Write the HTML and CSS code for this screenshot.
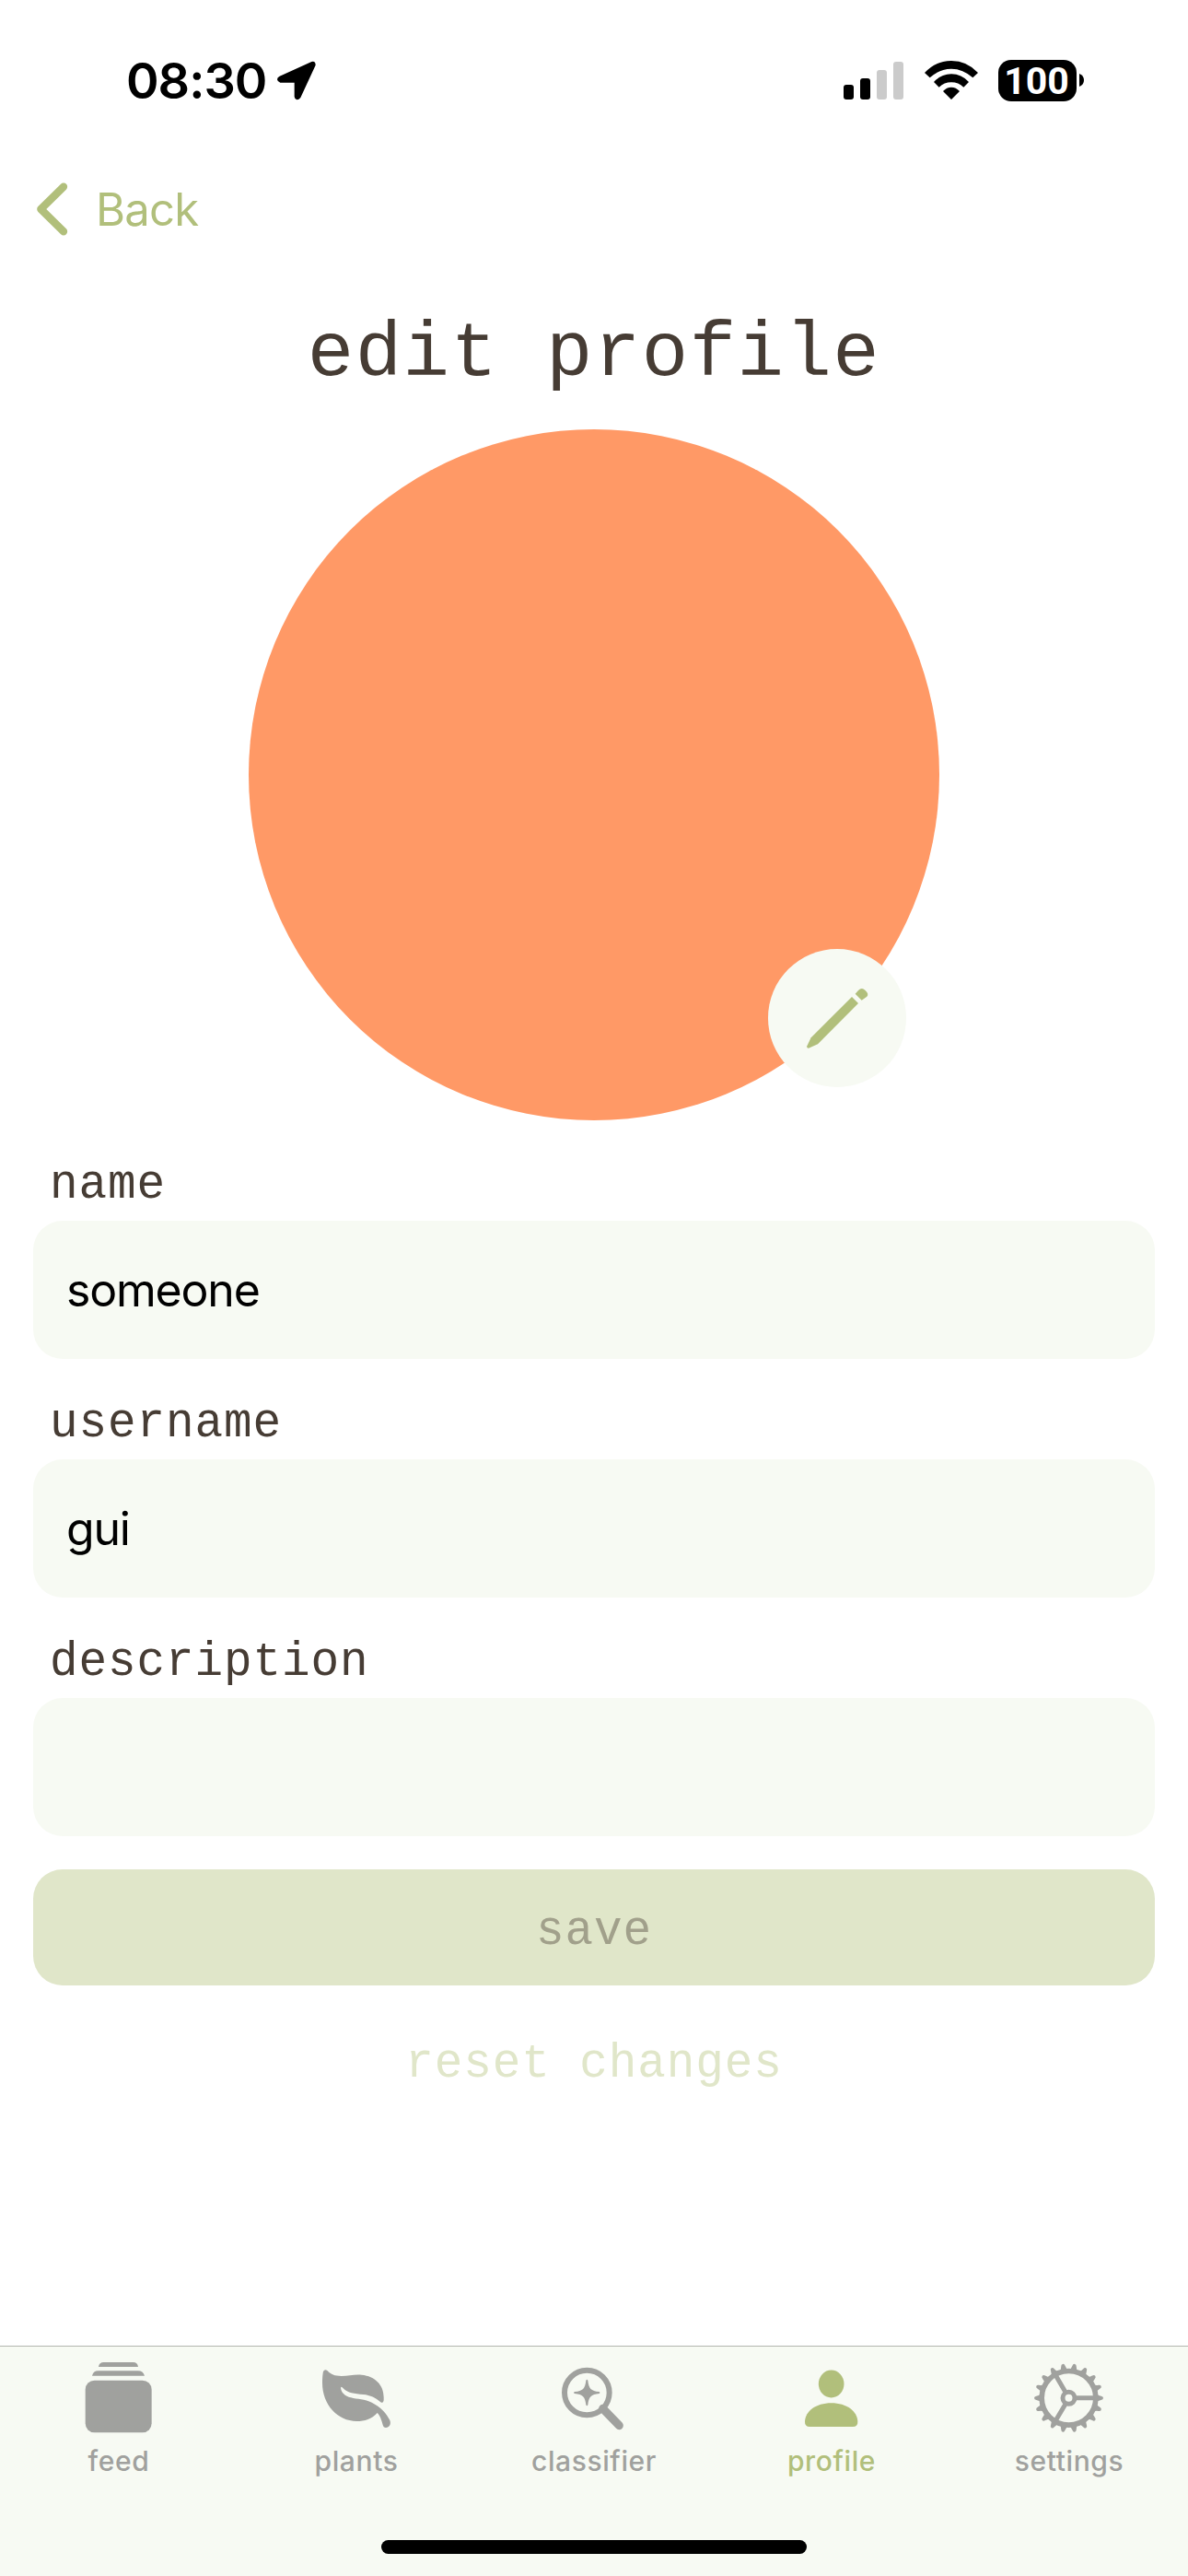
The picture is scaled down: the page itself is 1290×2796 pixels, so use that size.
FILE: index.html
```html
<!DOCTYPE html>
<html lang="en">
<head>
<meta charset="utf-8">
<title>edit profile</title>
<link rel="stylesheet" href="styles.css">
</head>
<body>
<div class="screen">
  <header class="status">
    <div class="status-left">
      <span class="time">08:30</span>
      <svg class="location" viewBox="900 80 132 129"><path d="M1015 83Q1028 80 1028 94L979 200Q974 207 967 207Q960 205 959 197V151H913Q904 149 903 141Q903 134 911 130Z"/></svg>
    </div>
    <div class="status-right">
      <svg class="signal" viewBox="108 78 195 123"><rect x="108" y="153" width="33" height="48" rx="9"/><rect x="162" y="132" width="33" height="69" rx="9"/><g fill="#cbcbcb"><rect x="216" y="105" width="33" height="96" rx="9"/><rect x="270" y="78" width="33" height="123" rx="9"/></g></svg>
      <svg class="wifi" viewBox="371 75 174 126"><path d="M371 114Q407 75 458 75T545 114L528 130Q496 101 458 101T388 130ZM401 144Q425 118 458 118T515 144L498 161Q481 145 458 145T418 161ZM431 174Q443 161 458 161T485 174L458 201Z"/></svg>
      <div class="battery"><span class="battery-body">100</span><svg class="battery-tip" viewBox="0 0 5 14"><path d="M0 0Q5 2 5 7T0 14Z"/></svg></div>
    </div>
  </header>

  <nav class="back">
    <svg class="chevron" viewBox="117 473 105 174"><path d="M207 487L133 560L207 633"/></svg>
    <span>Back</span>
  </nav>

  <h1 class="title">edit profile</h1>

  <div class="avatar">
    <button class="edit" aria-label="edit picture">
      <svg viewBox="102 90 450 450"><path d="M375 246L396 267L264 400L234 413Q227 413 229 406L242 379Z"/><path d="M386 236L396 225Q407 214 418 224Q432 236 424 245L407 257Z"/></svg>
    </button>
  </div>

  <main class="form">
    <label class="label">name</label>
    <div class="field">someone</div>
    <label class="label">username</label>
    <div class="field">gui</div>
    <label class="label">description</label>
    <div class="field"></div>
    <button class="save">save</button>
    <button class="reset">reset changes</button>
  </main>

  <footer class="tabbar">
    <div class="tabs">
      <div class="tab">
        <svg viewBox="252 81 270 270"><rect x="278" y="161" width="216" height="170" rx="30"/><path d="M300 146Q304 130 320 130H450Q466 130 471 146ZM321 117Q323 102 338 102H434Q448 102 450 117Z"/></svg>
        <span>feed</span>
      </div>
      <div class="tab">
        <svg viewBox="1026 81 270 270"><path d="M1053 132Q1058 122 1067 130C1078 142 1090 147 1112 147C1136 147 1152 141 1178 143C1222 147 1250 176 1250 216V226Q1248 238 1239 231C1224 218 1206 209 1184 207C1155 205 1132 202 1118 187Q1112 179 1110 185C1111 200 1124 212 1143 217C1164 223 1189 222 1211 233C1240 247 1260 270 1270 291C1275 304 1268 315 1257 315Q1249 315 1247 306C1243 290 1237 274 1229 267C1211 287 1188 294 1162 294C1100 294 1050 241 1050 169Q1050 145 1053 132Z"/></svg>
        <span>plants</span>
      </div>
      <div class="tab">
        <svg viewBox="180 81 270 270"><circle cx="292" cy="201" r="73" fill="none" stroke="currentColor" stroke-width="18"/><path d="M344 253L397 308" stroke="currentColor" stroke-width="27" stroke-linecap="round"/><path d="M289 161Q292 155 295 161C298 188 305 195 332 198Q337 201 332 204C305 207 298 214 295 241Q292 247 289 241C286 214 279 207 252 204Q246 201 252 198C279 195 286 188 289 161Z"/></svg>
        <span>classifier</span>
      </div>
      <div class="tab active">
        <svg viewBox="954 81 270 270"><ellipse cx="1088" cy="172.500" rx="41.500" ry="45"/><path d="M1002 294C1004 262 1037 235 1088 235S1172 262 1174 294Q1175 312 1158 312H1018Q1001 312 1002 294Z"/></svg>
        <span>profile</span>
      </div>
      <div class="tab">
        <svg viewBox="168 81 270 270">
          <defs><path id="tooth" d="M388 202Q398 211 407 212Q414 213 414 218.500T407 225Q398 226 388 235Z"/><g id="teeth"><use href="#tooth"/><use href="#tooth" transform="rotate(20 301.500 218.500)"/><use href="#tooth" transform="rotate(40 301.500 218.500)"/></g><g id="half"><use href="#teeth"/><use href="#teeth" transform="rotate(60 301.500 218.500)"/><use href="#teeth" transform="rotate(120 301.500 218.500)"/></g></defs>
          <use href="#half"/><use href="#half" transform="rotate(180 301.500 218.500)"/>
          <g fill="none" stroke="currentColor"><circle cx="301.500" cy="218.500" r="88" stroke-width="17"/><circle cx="301.500" cy="218.500" r="19.500" stroke-width="15"/><path d="M323 218.500H386M291 199.500L259 145M291 237.500L259 292" stroke-width="15"/></g>
        </svg>
        <span>settings</span>
      </div>
    </div>
    <div class="home"></div>
  </footer>
</div>
</body>
</html>
```
FILE: styles.css
```css
* { box-sizing: border-box; }
body { margin: 0; background: #fff; }
svg { display: block; fill: currentColor; }
button { border: 0; padding: 0; margin: 0; }

.screen {
  width: 1290px;
  height: 2796px;
  display: flex;
  flex-direction: column;
  font-family: Inter, "Liberation Sans", sans-serif;
  color: #000;
  background: #fff;
}

.status {
  height: 174px;
  padding: 0 113px 0 137px;
  display: flex;
  justify-content: space-between;
}
.status-left { display: flex; align-items: center; height: 174px; gap: 11px; }
.time { margin-top: 2px; font-size: 54px; font-weight: 600; line-height: 66px; letter-spacing: -1px; width: 152px; white-space: nowrap; }
.location { width: 44px; height: 43px; margin-top: 1px; }
.status-right { display: flex; align-items: center; height: 174px; }
.signal { width: 65px; height: 41px; margin-right: 23px; }
.wifi { width: 58px; height: 42px; margin-right: 22px; }
.battery { display: flex; align-items: center; gap: 3px; }
.battery-body {
  width: 85px;
  height: 45px;
  padding-right: 2px;
  border-radius: 14px;
  background: #000;
  color: #fff;
  font: 700 41px/46px Roboto, sans-serif;
  text-align: center;
}
.battery-tip { width: 5px; height: 14px; }

.back {
  height: 106px;
  padding-left: 39px;
  display: flex;
  align-items: center;
  gap: 30px;
  color: #b1bf7b;
  font-size: 49px;
  letter-spacing: -0.800px;
}
.chevron { width: 35px; height: 58px; fill: none; stroke: currentColor; stroke-width: 25px; stroke-linecap: round; stroke-linejoin: round; }

.title {
  margin: 0;
  height: 186px;
  padding-top: 45px;
  text-align: center;
  font: 400 84px/120px "Liberation Mono", monospace;
  letter-spacing: 1.460px;
  color: #463c34;
}

.avatar {
  position: relative;
  width: 750px;
  height: 750px;
  margin: 0 auto;
  border-radius: 50%;
  background: #ff9966;
}
.edit {
  position: absolute;
  right: 36px;
  bottom: 36px;
  width: 150px;
  height: 150px;
  border-radius: 50%;
  background: #f7faf3;
  color: #b1bf7b;
}

.form { flex: 1; padding: 0 36px; display: flex; flex-direction: column; }
.label {
  height: 109px;
  padding: 40px 0 0 18px;
  font: 400 51px/62px "Liberation Mono", monospace;
  letter-spacing: 0.900px;
  color: #463c34;
}
.field {
  height: 150px;
  padding-left: 36px;
  border-radius: 32px;
  background: #f7faf3;
  font-size: 50px;
  line-height: 151px;
  letter-spacing: -1.200px;
}
.save, .reset {
  padding-top: 9px;
  font: 400 51px/62px "Liberation Mono", monospace;
  letter-spacing: 0.900px;
}
.save { height: 126px; margin-top: 36px; border-radius: 32px; background: #e0e6c9; color: #a1a08b; }
.reset { height: 126px; margin-top: 18px; background: none; color: #e0e6c9; }

.tabbar {
  height: 250px;
  border-top: 1px solid #b2b5af;
  background: #f7faf3;
  display: flex;
  flex-direction: column;
  justify-content: space-between;
  padding: 10px 0 24px;
}
.tabs { display: grid; grid-template-columns: repeat(5, 1fr); }
.tab { display: flex; flex-direction: column; align-items: center; color: #a0a19e; }
.tab svg { width: 90px; height: 90px; }
.tab span { margin-top: 6px; font-size: 30px; font-weight: 500; line-height: 36px; letter-spacing: 0.600px; }
.tab.active { color: #b1bf7b; }
.home { width: 462px; height: 15px; margin: 0 auto; border-radius: 8px; background: #000; }
```
